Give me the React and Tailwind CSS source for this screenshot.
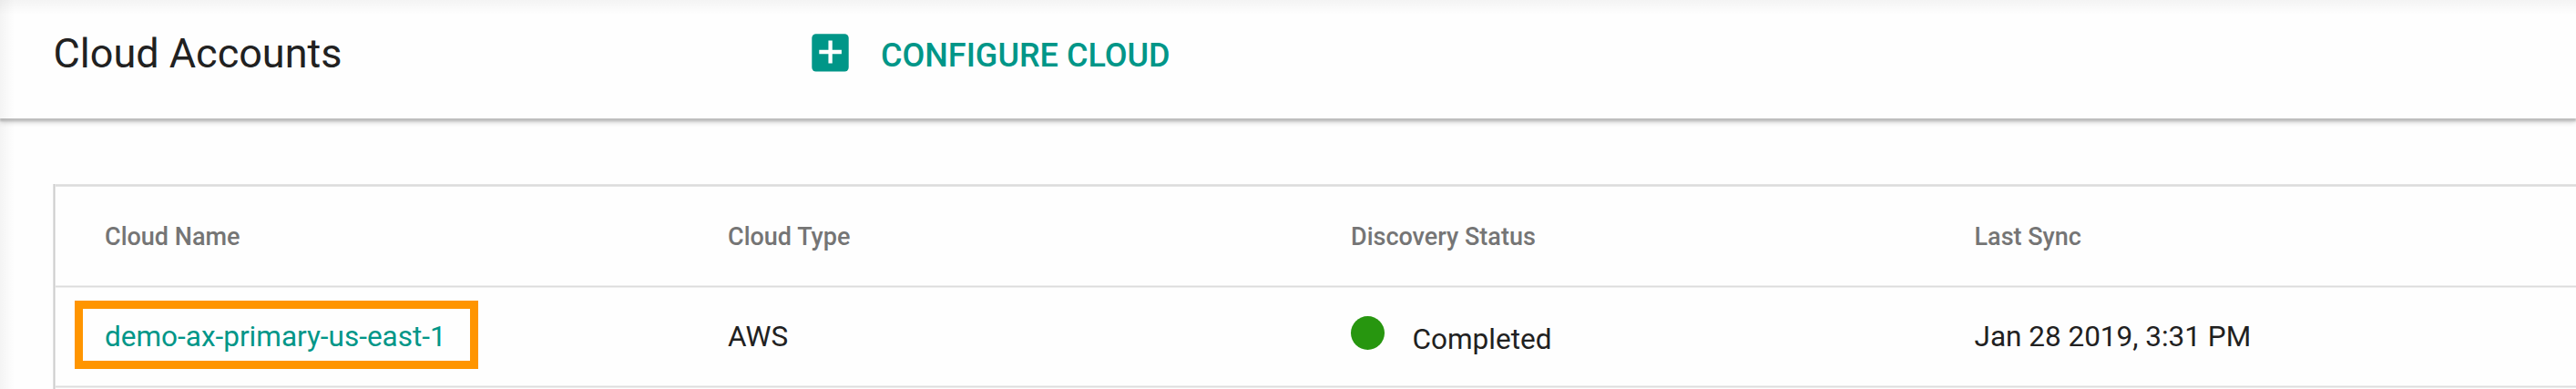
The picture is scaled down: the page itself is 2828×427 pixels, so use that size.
const columns = ["Cloud Name", "Cloud Type", "Discovery Status", "Last Sync"];

function AddBoxIcon() {
  return (
    <svg className="h-[42px] w-[41px]" viewBox="0 0 41 42" aria-hidden="true">
      <rect x="0.3" y="0.3" width="40.4" height="41.2" rx="4.5" fill="#009688" />
      <path d="M8.3 20H32.9M20.6 7.6V32.4" stroke="#fff" strokeWidth="4.3" fill="none" />
    </svg>
  );
}

function Header() {
  return (
    <header className="flex h-[130px] items-center pb-[12px] pl-[58.5px] shadow-[0_3px_2px_#bdbdbd,0_4px_6px_rgba(0,0,0,0.2)]">
      <h1 className="w-[832.5px] text-[45px] leading-[60px] text-[#212121]">Cloud Accounts</h1>
      <button className="flex items-center text-[36px] leading-[48px] font-medium text-[#009688]">
        <span className="-mt-[3px]">
          <AddBoxIcon />
        </span>
        <span className="pt-[3px] pl-[35px]">CONFIGURE CLOUD</span>
      </button>
    </header>
  );
}

function Line({ className }) {
  return <div className={"h-[3px] border-y bg-[#dcdcdc] " + className} />;
}

export default function App() {
  return (
    <div className="relative h-[427px] w-[2828px] overflow-hidden bg-[#fefefe] font-['Roboto',sans-serif] whitespace-nowrap">
      <Header />
      <main className="mt-[72px] ml-[58px] flex h-[240px]">
        <div className="w-[3px] shrink-0 border-x border-x-[#e3e3e3] bg-[#cccccc]" />
        <div className="flex-1">
          <Line className="border-[#e3e3e3] bg-[#cccccc]" />
          <div className="grid h-[108px] grid-cols-[684px_684px_684.5px_600px] items-center pt-[2px] pl-[54px] text-[27px] leading-[36px] font-medium text-[#757575]">
            {columns.map((label) => (
              <div key={label}>{label}</div>
            ))}
          </div>
          <Line className="border-[#eeeeee]" />
          <div className="grid h-[107px] grid-cols-[684px_684px_684.5px_600px] items-center pl-[54px] text-[31.5px] leading-[42px] text-[#212121]">
            <div className="relative">
              <a className="text-[#009688]">demo-ax-primary-us-east-1</a>
              <div className="absolute -top-[19px] -left-[33.5px] h-[75px] w-[443px] border-[9px] border-[#ff9500]" />
            </div>
            <div>AWS</div>
            <div className="flex items-center">
              <span className="-mt-[8px] size-[36.5px] rounded-full bg-[#27960f]" />
              <span className="pt-[6px] pl-[31px]">Completed</span>
            </div>
            <div>Jan 28 2019, 3:31 PM</div>
          </div>
          <Line className="border-[#eeeeee]" />
        </div>
      </main>
      <div className="pointer-events-none absolute inset-x-0 top-0 h-[16px] bg-linear-to-b from-black/4 to-transparent" />
      <div className="pointer-events-none absolute inset-y-0 left-0 w-[16px] bg-linear-to-r from-black/4 to-transparent" />
    </div>
  );
}
